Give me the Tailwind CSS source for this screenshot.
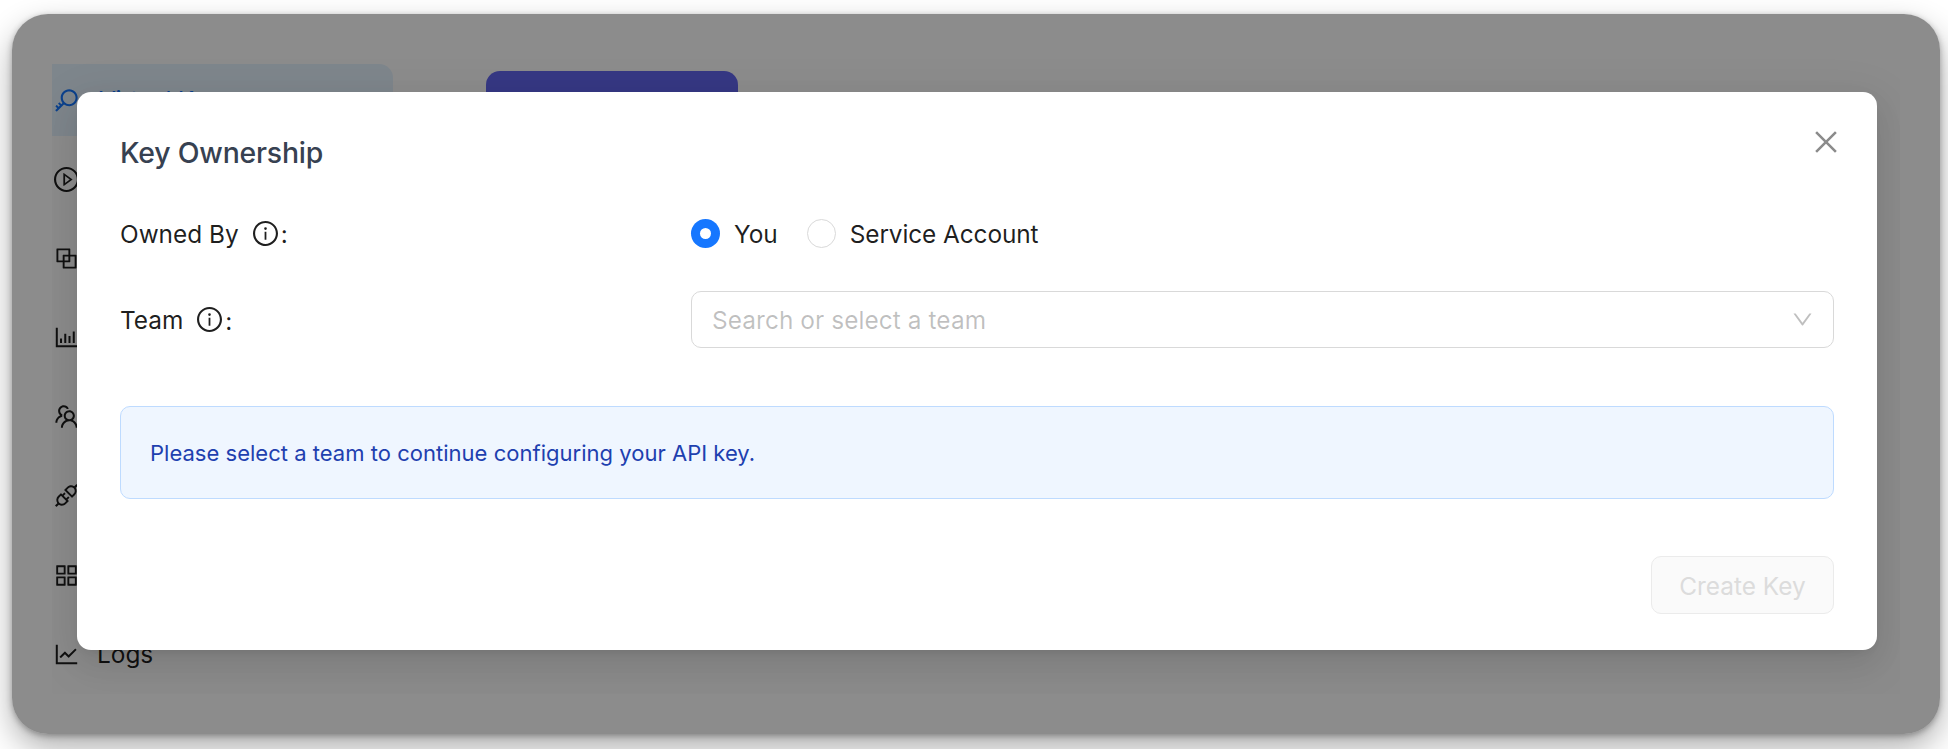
<!DOCTYPE html>
<html lang="en">
<head>
<meta charset="utf-8">
<title>Key Ownership</title>
<script src="https://cdn.jsdelivr.net/npm/@tailwindcss/browser@4"></script>
</head>
<body class="h-[749px] overflow-hidden bg-white pl-[12px] pt-[14px] font-['Inter',sans-serif] text-[24.4px] leading-[36px] text-black/88">
<div class="grid h-[720px] w-[1928px] overflow-hidden rounded-[36px] bg-white shadow-[0_14px_32px_rgba(0,0,0,0.32),0_2px_6px_rgba(0,0,0,0.3)]">

  <!-- Dashboard -->
  <div class="col-start-1 row-start-1 flex gap-[93px] pl-[40px] pt-[50px]">
    <nav class="flex w-[341px] flex-col gap-[7.2px]">
      <a class="flex h-[72px] items-center gap-[20px] rounded-r-[14px] bg-[#e6f4ff] pl-[2px] text-[#1677ff]">
        <svg class="size-[25px]" viewBox="64 64 896 896" fill="currentColor"><path d="M608 112c-167.9 0-304 136.1-304 304 0 70.3 23.9 135 63.9 186.5l-41.1 41.1-62.3-62.3a8.15 8.15 0 00-11.4 0l-39.8 39.8a8.15 8.15 0 000 11.4l62.3 62.3-44.9 44.9-62.3-62.3a8.15 8.15 0 00-11.4 0l-39.8 39.8a8.15 8.15 0 000 11.4l62.3 62.3-65.3 65.3a8.03 8.03 0 000 11.3l42.3 42.3c3.1 3.1 8.2 3.1 11.3 0l253.6-253.6A304.06 304.06 0 00608 720c167.9 0 304-136.1 304-304S775.9 112 608 112zm161.2 465.2C726.2 620.3 668.9 644 608 644c-60.9 0-118.2-23.7-161.2-66.8-43.1-43-66.8-100.3-66.8-161.2 0-60.9 23.7-118.2 66.8-161.2 43-43.1 100.3-66.8 161.2-66.8 60.9 0 118.2 23.7 161.2 66.8 43.1 43 66.8 100.3 66.8 161.2 0 60.9-23.7 118.2-66.8 161.2z"/></svg>
        <span class="tracking-[-0.3px]">Virtual Keys</span>
      </a>
      <a class="flex h-[72px] items-center pl-[2px]">
        <svg class="size-[25px]" viewBox="64 64 896 896" fill="currentColor"><path d="M512 64C264.6 64 64 264.6 64 512s200.6 448 448 448 448-200.6 448-448S759.4 64 512 64zm0 820c-205.4 0-372-166.6-372-372s166.6-372 372-372 372 166.6 372 372-166.6 372-372 372z"/><path d="M719.4 499.1l-296.1-215A15.9 15.9 0 00398 297v430c0 13.1 14.8 20.5 25.3 12.9l296.1-215a15.9 15.9 0 000-25.8zm-257.6 134V390.9L628.5 512 461.8 633.1z"/></svg>
      </a>
      <a class="flex h-[72px] items-center pl-[2px]">
        <svg class="size-[25px]" viewBox="64 64 896 896" fill="currentColor"><path d="M856 376H648V168c0-8.8-7.2-16-16-16H168c-8.8 0-16 7.2-16 16v464c0 8.8 7.2 16 16 16h208v208c0 8.8 7.2 16 16 16h464c8.8 0 16-7.2 16-16V392c0-8.8-7.2-16-16-16zm-480 16v188H220V220h360v156H392c-8.8 0-16 7.2-16 16zm204 52v136H444V444h136zm224 360H444V648h188c8.8 0 16-7.2 16-16V444h156v360z"/></svg>
      </a>
      <a class="flex h-[72px] items-center pl-[2px]">
        <svg class="size-[25px]" viewBox="64 64 896 896" fill="currentColor"><path d="M888 792H200V168c0-4.4-3.6-8-8-8h-56c-4.4 0-8 3.6-8 8v688c0 4.4 3.6 8 8 8h752c4.4 0 8-3.6 8-8v-56c0-4.4-3.6-8-8-8zm-600-80h56c4.4 0 8-3.6 8-8V560c0-4.4-3.6-8-8-8h-56c-4.4 0-8 3.6-8 8v144c0 4.4 3.6 8 8 8zm152 0h56c4.4 0 8-3.6 8-8V384c0-4.4-3.6-8-8-8h-56c-4.4 0-8 3.6-8 8v320c0 4.4 3.6 8 8 8zm152 0h56c4.4 0 8-3.6 8-8V462c0-4.4-3.6-8-8-8h-56c-4.4 0-8 3.6-8 8v242c0 4.4 3.6 8 8 8zm152 0h56c4.4 0 8-3.6 8-8V304c0-4.4-3.6-8-8-8h-56c-4.4 0-8 3.6-8 8v400c0 4.4 3.6 8 8 8z"/></svg>
      </a>
      <a class="flex h-[72px] items-center pl-[2px]">
        <svg class="size-[25px]" viewBox="64 64 896 896" fill="currentColor"><path d="M824.2 699.9a301.55 301.55 0 00-86.4-60.4C783.1 602.8 812 546.8 812 484c0-110.8-92.4-201.7-203.2-200-109.1 1.7-197 90.6-197 200 0 62.8 29 118.8 74.2 155.5a300.95 300.95 0 00-86.4 60.4C345 754.6 314 826.8 312 903.8a8 8 0 008 8.2h56c4.3 0 7.9-3.4 8-7.7 1.9-58 25.4-112.3 66.7-153.5A226.62 226.62 0 01612 684c60.9 0 118.2 23.7 161.3 66.8C814.6 792 838 846.3 840 904.3c.1 4.3 3.7 7.7 8 7.7h56a8 8 0 008-8.2c-2-77-33-149.2-87.8-203.9zM612 612c-34.2 0-66.4-13.3-90.5-37.5a126.86 126.86 0 01-37.5-91.8c.3-32.8 13.4-64.5 36.3-88 24-24.6 56.1-38.3 90.4-38.7 33.9-.3 66.8 12.9 91 36.6 24.8 24.3 38.4 56.8 38.4 91.4 0 34.2-13.3 66.3-37.5 90.5A127.3 127.3 0 01612 612zM361.5 510.4c-.9-8.7-1.4-17.5-1.4-26.4 0-15.9 1.5-31.4 4.3-46.5.7-3.6-1.2-7.3-4.5-8.8-13.6-6.1-26.1-14.5-36.9-25.1a127.54 127.54 0 01-38.7-95.4c.9-32.1 13.8-62.6 36.3-85.6 24.7-25.3 57.9-39.1 93.2-38.7 31.9.3 62.7 12.6 86 34.4 7.9 7.4 14.7 15.6 20.4 24.4 2 3.1 5.9 4.4 9.3 3.2 17.6-6.1 36.2-10.4 55.3-12.4 5.6-.6 8.8-6.6 6.3-11.6-32.5-64.3-98.9-108.7-175.7-109.9-110.9-1.7-203.3 89.2-203.3 199.9 0 62.8 28.9 118.8 74.2 155.5-31.8 14.7-61.1 35-86.5 60.4-54.8 54.7-85.8 126.9-87.8 204a8 8 0 008 8.2h56.1c4.3 0 7.9-3.4 8-7.7 1.9-58 25.4-112.3 66.7-153.5 29.4-29.4 65.4-49.8 104.7-59.7 3.9-1 6.5-4.7 6-8.7z"/></svg>
      </a>
      <a class="flex h-[72px] items-center pl-[2px]">
        <svg class="size-[25px]" viewBox="64 64 896 896" fill="currentColor"><path d="M917.7 148.8l-42.4-42.4c-1.6-1.6-3.6-2.3-5.7-2.3s-4.1.8-5.7 2.3l-76.1 76.1a199.27 199.27 0 00-112.1-34.3c-51.2 0-102.4 19.5-141.5 58.6L432.3 308.7a8.03 8.03 0 000 11.3L704 591.7c1.6 1.6 3.6 2.3 5.7 2.3 2 0 4.1-.8 5.7-2.3l101.9-101.9c68.9-69 77-175.7 24.3-253.5l76.1-76.1c3.1-3.2 3.1-8.3 0-11.4zM769.1 441.7l-59.4 59.4-186.8-186.8 59.4-59.4c24.9-24.9 58.1-38.7 93.4-38.7 35.3 0 68.4 13.7 93.4 38.7 24.9 24.9 38.7 58.1 38.7 93.4 0 35.3-13.8 68.4-38.7 93.4zm-190.2 105a8.03 8.03 0 00-11.3 0L501 613.3 410.7 523l66.7-66.7c3.1-3.1 3.1-8.2 0-11.3L441 408.6a8.03 8.03 0 00-11.3 0L363 475.3l-43-43a7.85 7.85 0 00-5.7-2.3c-2 0-4.1.8-5.7 2.3L206.8 534.2c-68.9 69-77 175.7-24.3 253.5l-76.1 76.1a8.03 8.03 0 000 11.3l42.4 42.4c1.6 1.6 3.6 2.3 5.7 2.3s4.1-.8 5.7-2.3l76.1-76.1c33.7 22.9 72.9 34.3 112.1 34.3 51.2 0 102.4-19.5 141.5-58.6l101.9-101.9c3.1-3.1 3.1-8.2 0-11.3l-43-43 66.7-66.7c3.1-3.1 3.1-8.2 0-11.3l-36.6-36.2zM441.7 769.1a131.32 131.32 0 01-93.4 38.7c-35.3 0-68.4-13.7-93.4-38.7a131.32 131.32 0 01-38.7-93.4c0-35.3 13.7-68.4 38.7-93.4l59.4-59.4 186.8 186.8-59.4 59.4z"/></svg>
      </a>
      <a class="flex h-[72px] items-center pl-[2px]">
        <svg class="size-[25px]" viewBox="64 64 896 896" fill="currentColor"><path d="M464 144H160c-8.8 0-16 7.2-16 16v304c0 8.8 7.2 16 16 16h304c8.8 0 16-7.2 16-16V160c0-8.8-7.2-16-16-16zm-52 268H212V212h200v200zm452-268H560c-8.8 0-16 7.2-16 16v304c0 8.8 7.2 16 16 16h304c8.8 0 16-7.2 16-16V160c0-8.8-7.2-16-16-16zm-52 268H612V212h200v200zM464 544H160c-8.8 0-16 7.2-16 16v304c0 8.8 7.2 16 16 16h304c8.8 0 16-7.2 16-16V560c0-8.8-7.2-16-16-16zm-52 268H212V612h200v200zm452-268H560c-8.8 0-16 7.2-16 16v304c0 8.8 7.2 16 16 16h304c8.8 0 16-7.2 16-16V560c0-8.8-7.2-16-16-16zm-52 268H612V612h200v200z"/></svg>
      </a>
      <a class="flex h-[72px] items-center gap-[18px] pl-[2px]">
        <svg class="size-[25px]" viewBox="64 64 896 896" fill="currentColor"><path d="M888 792H200V168c0-4.4-3.6-8-8-8h-56c-4.4 0-8 3.6-8 8v688c0 4.4 3.6 8 8 8h752c4.4 0 8-3.6 8-8v-56c0-4.4-3.6-8-8-8zM305.8 637.7c3.1 3.1 8.1 3.1 11.3 0l138.3-137.6L583 628.5c3.1 3.1 8.2 3.1 11.3 0l275.4-275.3c3.1-3.1 3.1-8.2 0-11.3l-39.6-39.6a8.03 8.03 0 00-11.3 0l-230 229.9L461.4 404a8.03 8.03 0 00-11.3 0L266.3 586.7a8.03 8.03 0 000 11.3l39.5 39.7z"/></svg>
        <span>Logs</span>
      </a>
    </nav>
    <div class="mt-[7px] h-[64px] w-[252px] rounded-[14px] bg-[#6366f1]"></div>
  </div>

  <!-- Modal layer -->
  <div class="z-10 col-start-1 row-start-1 bg-black/45 px-[40px] py-[40px]">
    <div class="h-[640px] w-[1848px] overflow-hidden pl-[25px] pt-[38px]">
      <section class="flex h-[558px] w-[1800px] flex-col rounded-[14px] bg-white px-[43px] shadow-[0_11px_29px_0_rgba(0,0,0,0.08),0_5px_11px_-7px_rgba(0,0,0,0.12),0_16px_50px_14px_rgba(0,0,0,0.05)]">
        <header class="flex items-start justify-between">
          <h2 class="pt-[43px] text-[28.4px] font-medium leading-[36px] tracking-[-0.18px] text-[#374151]">Key Ownership</h2>
          <svg class="-mr-[6px] mt-[36px] size-[28px] text-black/45" viewBox="64 64 896 896" fill="currentColor"><path d="M799.9 166.3l57.8 57.8L569.9 512l287.8 287.8-57.8 57.9L512 569.9 224.2 857.7l-57.9-57.9L454.1 512 166.3 224.2l57.8-57.9L512 454.1z"/></svg>
        </header>
        <div class="mt-[33px] flex h-[58px] items-center">
          <div class="flex w-[571px] items-center"><span class="pt-px">Owned By</span>
            <svg class="ml-[14px] size-[25px]" viewBox="64 64 896 896" fill="currentColor"><path d="M512 64C264.6 64 64 264.6 64 512s200.6 448 448 448 448-200.6 448-448S759.4 64 512 64zm0 820c-205.4 0-372-166.6-372-372s166.6-372 372-372 372 166.6 372 372-166.6 372-372 372z"/><path d="M464 336a48 48 0 1096 0 48 48 0 10-96 0zm72 112h-48c-4.4 0-8 3.6-8 8v272c0 4.4 3.6 8 8 8h48c4.4 0 8-3.6 8-8V456c0-4.4-3.6-8-8-8z"/></svg><span class="ml-[3px] pt-[2px]">:</span></div>
          <div class="flex items-center">
            <span class="flex size-[29px] items-center justify-center rounded-full bg-[#1677ff]"><span class="size-[11px] rounded-full bg-white"></span></span>
            <span class="ml-[14px] pt-px">You</span>
            <span class="ml-[29px] size-[29px] rounded-full border border-[#d9d9d9]"></span>
            <span class="ml-[14px] pt-px tracking-[-0.1px]">Service Account</span>
          </div>
        </div>
        <div class="mt-[29px] flex h-[57px] items-center">
          <div class="flex w-[571px] items-center"><span class="pt-px">Team</span>
            <svg class="ml-[14px] size-[25px]" viewBox="64 64 896 896" fill="currentColor"><path d="M512 64C264.6 64 64 264.6 64 512s200.6 448 448 448 448-200.6 448-448S759.4 64 512 64zm0 820c-205.4 0-372-166.6-372-372s166.6-372 372-372 372 166.6 372 372-166.6 372-372 372z"/><path d="M464 336a48 48 0 1096 0 48 48 0 10-96 0zm72 112h-48c-4.4 0-8 3.6-8 8v272c0 4.4 3.6 8 8 8h48c4.4 0 8-3.6 8-8V456c0-4.4-3.6-8-8-8z"/></svg><span class="ml-[3px] pt-[2px]">:</span></div>
          <div class="flex h-[57px] w-[1143px] items-center justify-between rounded-[10px] border border-[#d9d9d9] pl-[20px] pr-[20px] text-black/25">
            <span class="pt-px tracking-[0.08px]">Search or select a team</span>
            <svg class="size-[21px]" viewBox="64 64 896 896" fill="currentColor"><path d="M884 256h-75c-5.1 0-9.9 2.5-12.9 6.6L512 654.2 227.9 262.6c-3-4.1-7.8-6.6-12.9-6.6h-75c-6.5 0-10.3 7.4-6.5 12.7l352.6 486.1c12.8 17.6 39 17.6 51.7 0l352.6-486.1c3.9-5.3.1-12.7-6.4-12.7z"/></svg>
          </div>
        </div>
        <div class="mt-[58px] flex h-[93px] items-center rounded-[10px] border border-[#bedbff] bg-[#eff6ff] pl-[29px] text-[22px] tracking-[0.02px] text-[#1e40af]"><span>Please select a team to continue configuring your API key.</span></div>
        <button class="mt-[57px] flex h-[58px] w-[183px] items-center justify-center self-end rounded-[10px] border border-[#ebebeb] bg-[#fafafa] text-[#dcdcdc]"><span class="pt-[2px]">Create Key</span></button>
      </section>
    </div>
  </div>
</div>
</body>
</html>
